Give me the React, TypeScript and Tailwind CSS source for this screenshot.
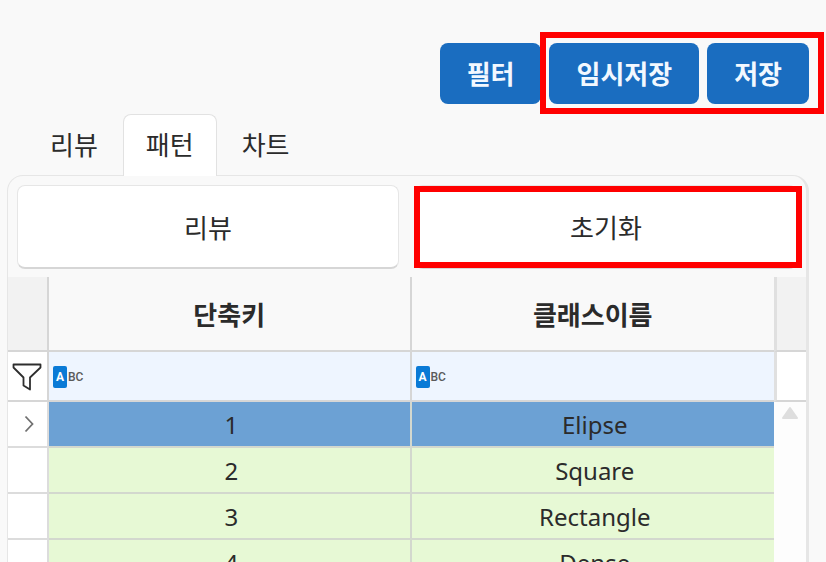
import { useState } from "react";
import clsx from "clsx";

const TABS = ["리뷰", "패턴", "차트"];

const COLUMNS = [
  { key: "shortcut", label: "단축키" },
  { key: "className", label: "클래스이름" },
] as const;

interface ShapeClass {
  shortcut: string;
  className: string;
}

const CLASSES: ShapeClass[] = [
  { shortcut: "1", className: "Elipse" },
  { shortcut: "2", className: "Square" },
  { shortcut: "3", className: "Rectangle" },
  { shortcut: "4", className: "Dense" },
];

function ToolbarButton({ label }: { label: string }) {
  return (
    <button
      type="button"
      className="h-[61px] rounded-lg bg-[#1a6dc0] px-[27px] pb-0.5 text-[26px] font-bold leading-8 text-[#f2f8ff] hover:bg-[#155fa9]"
    >
      {label}
    </button>
  );
}

function PanelButton({ label }: { label: string }) {
  return (
    <button
      type="button"
      className="h-[84px] w-full rounded-lg border border-b-2 border-[#e6e6e6] border-b-[#d6d6d6] bg-white text-[26px] leading-8 hover:bg-gray-50"
    >
      {label}
    </button>
  );
}

function FunnelIcon() {
  return (
    <svg width="30" height="28" viewBox="0 0 30 28" fill="none" stroke="#2e2e2e" strokeWidth="1.8" strokeLinejoin="round" aria-hidden="true">
      <path d="M1.5 1.5H28.5V4.5L18 14.5V26.5L11.5 22.5V14.5L1.5 4.5Z" />
    </svg>
  );
}

function ChevronIcon() {
  return (
    <svg width="10" height="18" viewBox="0 0 10 18" fill="none" stroke="#707070" strokeWidth="1.8" aria-hidden="true">
      <path d="M1.5 1.5L8.5 9L1.5 16.5" />
    </svg>
  );
}

function ScrollUpIcon() {
  return (
    <svg width="18" height="14" viewBox="0 0 18 14" fill="#dedede" stroke="#dedede" strokeWidth="2" strokeLinejoin="round" aria-hidden="true">
      <path d="M9 2L16 12H2Z" />
    </svg>
  );
}

function FilterCell({ label }: { label: string }) {
  const [value, setValue] = useState("");

  return (
    <div className="flex items-center gap-1 pl-1 pt-0.5">
      <span className="flex shrink-0 items-center gap-px font-['Roboto',sans-serif] text-[12px] font-medium leading-[22px] text-[#5a5a5a]">
        <span className="w-[14px] rounded-[2px] bg-[#0a7ad6] text-center font-bold text-white">A</span>
        BC
      </span>
      <input
        type="text"
        aria-label={label}
        value={value}
        onChange={(e) => setValue(e.target.value)}
        className="h-10 min-w-0 flex-1 bg-transparent text-2xl font-normal outline-none"
      />
    </div>
  );
}

export default function App() {
  const [tab, setTab] = useState("패턴");
  const [selected, setSelected] = useState("1");

  return (
    <div className="flex h-screen flex-col overflow-hidden bg-[#f9f9f9] pl-[7px] pr-[17px] pt-[43px] font-['Noto_Sans_CJK_KR',sans-serif] text-[#2b2b2b]">
      <div className="flex shrink-0 justify-end gap-2">
        <ToolbarButton label="필터" />
        <div className="relative flex gap-2">
          <ToolbarButton label="임시저장" />
          <ToolbarButton label="저장" />
          <div className="pointer-events-none absolute -bottom-2.5 -left-[9px] -right-[15px] -top-[11px] border-[6px] border-[#ff0000]" />
        </div>
      </div>

      <div role="tablist" className="relative z-10 -mb-px mt-2.5 flex shrink-0 gap-0.5 pl-5">
        {TABS.map((name) => (
          <button
            key={name}
            type="button"
            role="tab"
            aria-selected={tab === name}
            onClick={() => setTab(name)}
            className={clsx(
              "h-[62px] rounded-t-lg border border-b-0 px-[22px] pb-1 text-[26px] leading-8",
              tab === name ? "border-[#e2e2e2] bg-white" : "border-transparent"
            )}
          >
            {name}
          </button>
        ))}
      </div>

      <div role="tabpanel" className="min-h-0 flex-1 overflow-hidden rounded-t-2xl border border-b-0 border-r-[3px] border-[#e6e6e6]">
        <div className="flex gap-4 px-[9px] pb-2 pt-[9px]">
          <div className="flex-1">
            <PanelButton label="리뷰" />
          </div>
          <div className="relative flex-1">
            <PanelButton label="초기화" />
            <div className="pointer-events-none absolute -left-px -right-[5px] bottom-px top-px border-[6px] border-[#ff0000]" />
          </div>
        </div>

        <table className="w-full table-fixed border-separate border-spacing-0 text-center">
          <colgroup>
            <col className="w-[41px]" />
            <col />
            <col />
            <col className="w-8" />
          </colgroup>
          <thead>
            <tr className="h-[75px]">
              <td className="border-b-2 border-r-2 border-[#d6d6d6] bg-[#f2f2f2]" />
              {COLUMNS.map((col, i) => (
                <th
                  key={col.key}
                  scope="col"
                  className={clsx(
                    "border-b-2 border-[#d6d6d6] p-0 text-[26px] font-bold leading-8",
                    i === 0 && "border-r-2"
                  )}
                >
                  {col.label}
                </th>
              ))}
              <td className="border-b-2 border-l-[3px] border-[#d6d6d6] border-l-[#e0e0e0] bg-[#f2f2f2]" />
            </tr>
            <tr className="h-[50px]">
              <td className="border-b-2 border-r-2 border-[#d6d6d6] bg-white p-0">
                <div className="pl-1 pt-0.5">
                  <FunnelIcon />
                </div>
              </td>
              {COLUMNS.map((col, i) => (
                <td
                  key={col.key}
                  className={clsx("border-b-2 border-[#d6d6d6] bg-[#eef5ff] p-0", i === 0 && "border-r-2")}
                >
                  <FilterCell label={col.label} />
                </td>
              ))}
              <td className="border-b-2 border-l-[3px] border-[#d6d6d6] border-l-[#e0e0e0] bg-white" />
            </tr>
          </thead>
          <tbody className="font-['Noto_Sans','Noto_Sans_CJK_KR',sans-serif] text-2xl leading-8">
            {CLASSES.map((row, i) => (
              <tr
                key={row.shortcut}
                onClick={() => setSelected(row.shortcut)}
                className={clsx("h-[46px]", selected === row.shortcut ? "bg-[#6ca1d4]" : "bg-[#e7f9d5]")}
              >
                <td className="border-b-2 border-r-2 border-[#dcdcdc] bg-white p-0">
                  {selected === row.shortcut && (
                    <div className="flex justify-center pl-0.5">
                      <ChevronIcon />
                    </div>
                  )}
                </td>
                <td className="border-b-2 border-r-2 border-[#d3d8ce] p-0 pl-1 pt-0.5">{row.shortcut}</td>
                <td className="border-b-2 border-[#d3d8ce] p-0 pl-1 pt-0.5">{row.className}</td>
                {i === 0 && (
                  <td rowSpan={CLASSES.length} className="bg-[#fdfdfd] p-0 pt-1 align-top">
                    <button type="button" aria-label="위로 스크롤" className="mx-auto block">
                      <ScrollUpIcon />
                    </button>
                  </td>
                )}
              </tr>
            ))}
          </tbody>
        </table>
      </div>
    </div>
  );
}
